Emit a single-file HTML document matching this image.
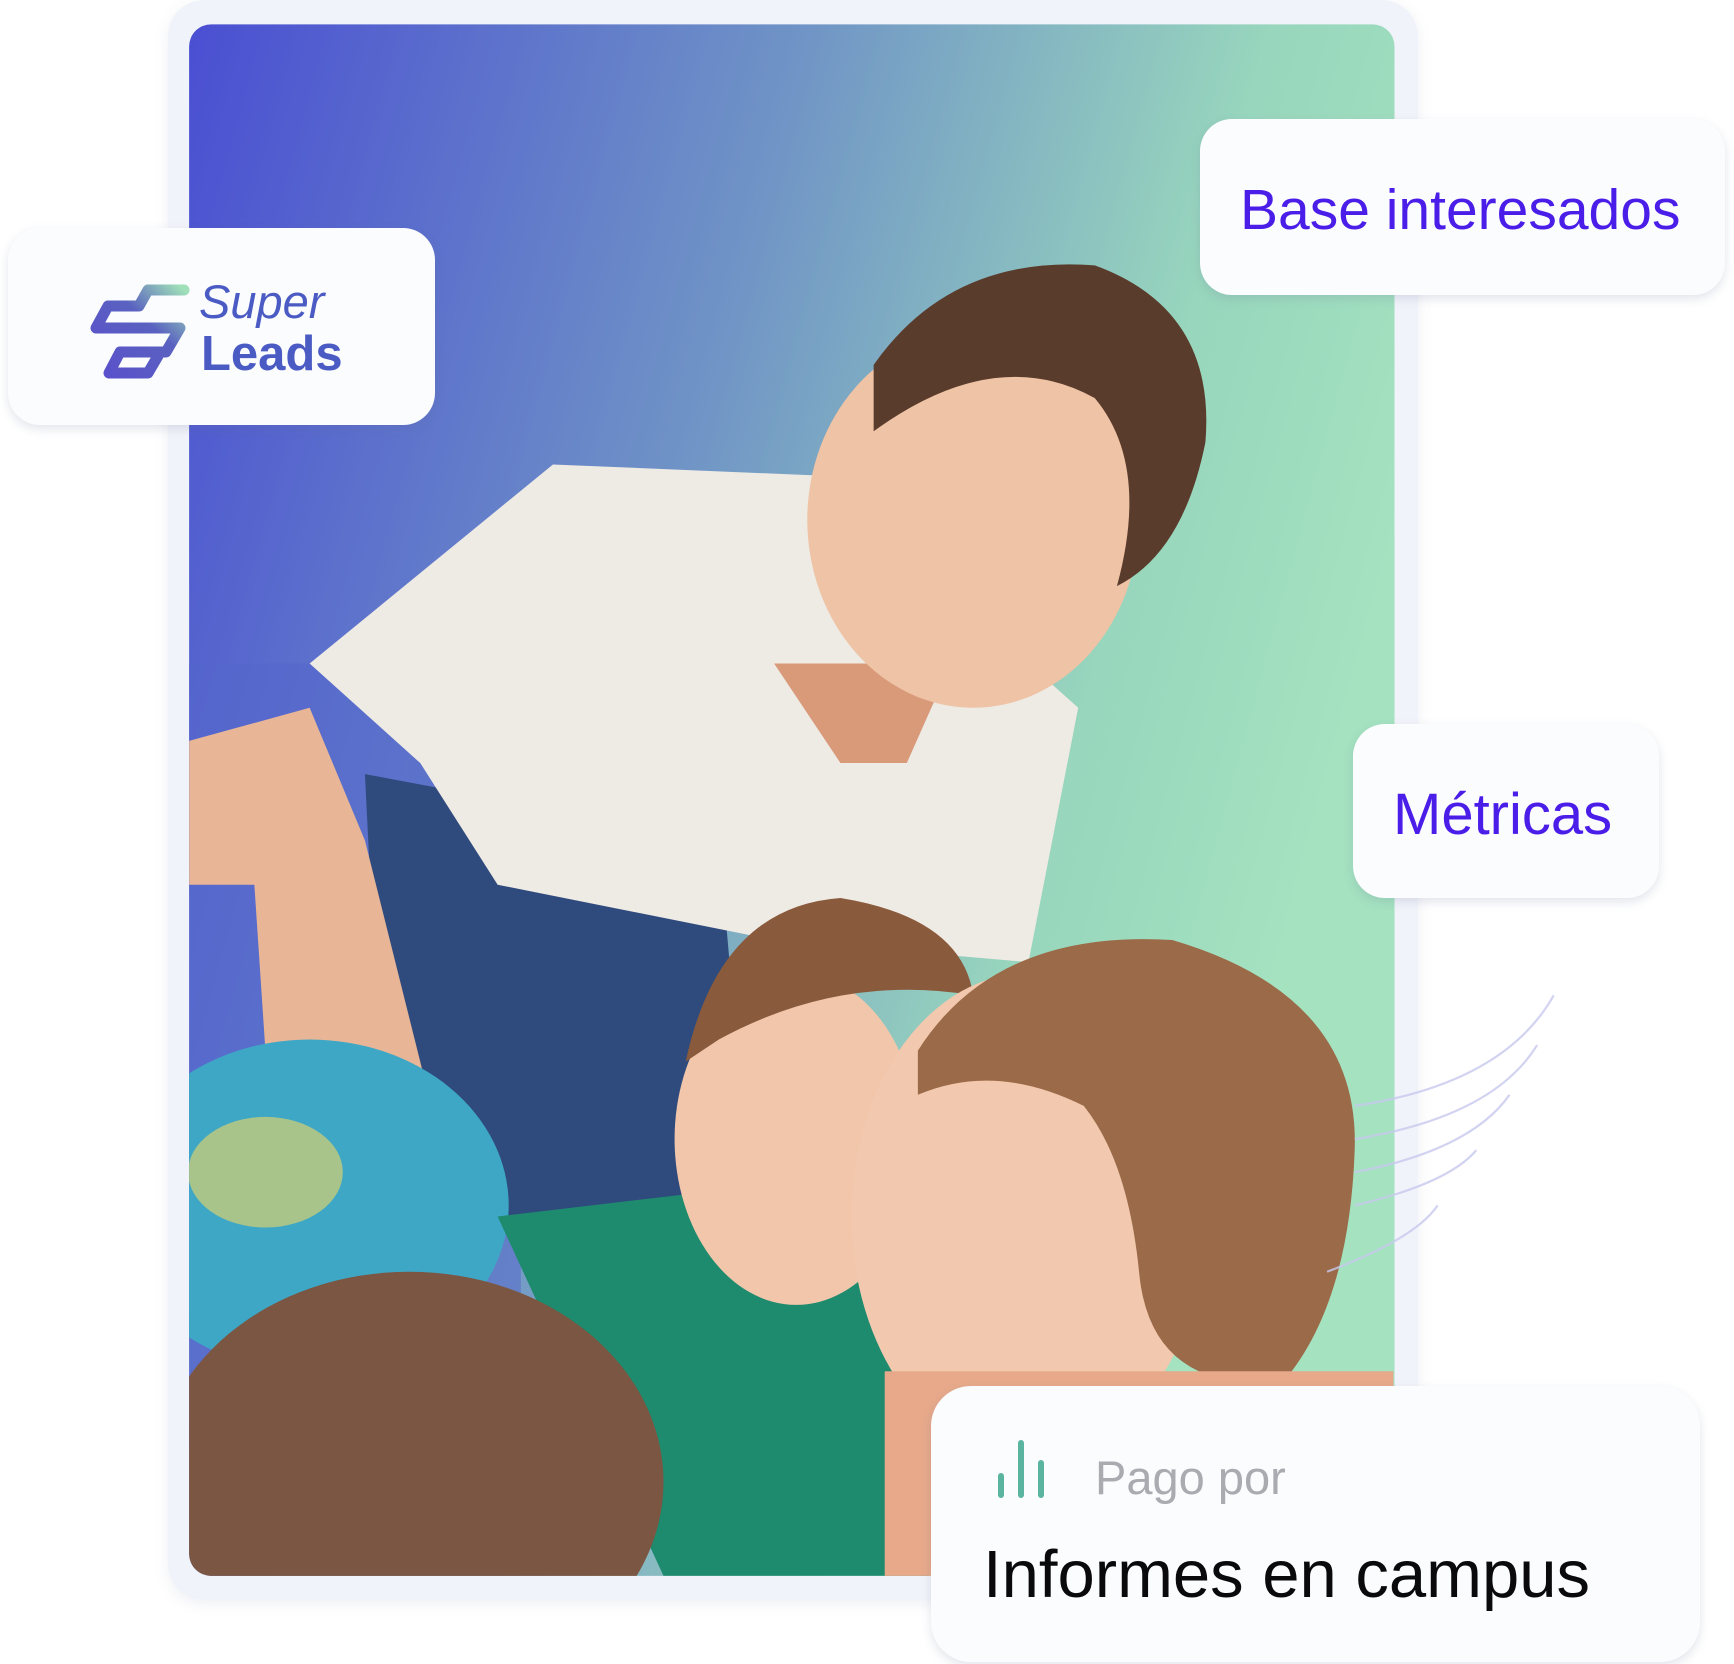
<!DOCTYPE html>
<html><head><meta charset="utf-8"><style>
html,body{margin:0;padding:0;background:#fff;}
body{width:1734px;height:1664px;position:relative;overflow:hidden;font-family:"Liberation Sans",sans-serif;}
.frame{position:absolute;left:168px;top:0;width:1250px;height:1600px;border-radius:36px;background:#f1f3fa;box-shadow:0 4px 14px rgba(120,130,170,.12);}
svg.bg{position:absolute;left:0;top:0;}
.card{position:absolute;background:#fbfcfe;border-radius:32px;box-shadow:0 4px 10px rgba(100,110,150,.18);}
.t{position:absolute;white-space:nowrap;line-height:1;}
</style></head><body>
<div class="frame"></div>
<svg class="bg" width="1734" height="1664" viewBox="0 0 1734 1664">
<defs>
<linearGradient id="g" x1="0" y1="0" x2="1" y2="0.35">
<stop offset="0" stop-color="#4a4fd2"/><stop offset="0.45" stop-color="#6f93c6"/><stop offset="0.8" stop-color="#98d6bd"/><stop offset="1" stop-color="#a4e2c0"/></linearGradient>
<clipPath id="c"><rect x="171" y="22" width="1090" height="1403" rx="20"/></clipPath>
</defs>
<g transform="scale(1.10587)">
<rect x="171" y="22" width="1090" height="1403" rx="20" fill="url(#g)"/>
<g clip-path="url(#c)">
<rect x="171" y="600" width="300" height="825" fill="#5465cc" opacity=".5"/>
<polygon points="330,700 650,760 680,1100 420,1110 340,900" fill="#2f4a7c"/>
<polygon points="171,670 280,640 330,760 390,1000 340,1030 240,950 230,800 171,800" fill="#e8b696"/>
<polygon points="280,600 500,420 740,430 975,640 930,870 700,850 450,800 380,690" fill="#eeeae4"/>
<polygon points="700,600 860,600 820,690 760,690" fill="#d99a7a"/>
<ellipse cx="880" cy="470" rx="150" ry="170" fill="#efc3a5"/>
<path d="M790,330 Q860,230 990,240 Q1100,280 1090,400 Q1070,500 1010,530 Q1040,420 990,360 Q900,310 790,390 Z" fill="#5a3c2c"/>
<ellipse cx="280" cy="1090" rx="180" ry="150" fill="#3ea7c6"/>
<ellipse cx="240" cy="1060" rx="70" ry="50" fill="#a8c48a"/>
<polygon points="450,1100 620,1080 840,1140 840,1425 600,1425" fill="#1e8a6e"/>
<ellipse cx="720" cy="1030" rx="110" ry="150" fill="#f1c6aa"/>
<path d="M620,960 Q650,820 760,812 Q870,830 880,900 Q760,880 650,940 Z" fill="#8a5a3c"/>
<ellipse cx="930" cy="1100" rx="160" ry="220" fill="#f2c9ae"/>
<path d="M830,950 Q900,840 1060,850 Q1230,900 1225,1040 Q1220,1180 1160,1250 Q1040,1260 1030,1150 Q1020,1050 980,1000 Q900,960 830,990 Z" fill="#9b6a48"/>
<rect x="800" y="1240" width="460" height="200" fill="#e7a98a"/>
<ellipse cx="370" cy="1340" rx="230" ry="190" fill="#7b5642"/>
</g>
<g fill="none" stroke="#c8c9ee" stroke-width="2" opacity=".8">
<path d="M1225,1000 Q1360,980 1405,900"/><path d="M1225,1030 Q1350,1010 1390,945"/><path d="M1225,1060 Q1330,1040 1365,990"/><path d="M1225,1090 Q1310,1070 1335,1040"/><path d="M1200,1150 Q1280,1120 1300,1090"/>
</g>
</g>
</svg>

<div class="card" style="left:8px;top:228px;width:427px;height:197px;">
<svg width="120" height="120" style="position:absolute;left:70px;top:45px" viewBox="70 45 120 120">
<defs><linearGradient id="lg" x1="0" y1="1" x2="1" y2="0"><stop offset="0" stop-color="#5a4fcc"/><stop offset=".6" stop-color="#5a62c0"/><stop offset="1" stop-color="#9fe0b8"/></linearGradient></defs>
<path d="M176,62 H140 L131,78 M131,78 H100 L88,100 H172 L158,124 H112 L101,145 H140 L150,128" fill="none" stroke="url(#lg)" stroke-width="11" stroke-linejoin="round" stroke-linecap="round"/>
</svg>
<div class="t" style="left:191px;top:50px;font-size:47px;font-style:italic;color:#4b5bc4;">Super</div>
<div class="t" style="left:193px;top:102px;font-size:49px;font-weight:bold;color:#4b5bc4;">Leads</div>
</div>

<div class="card" style="left:1200px;top:119px;width:525px;height:176px;">
<div class="t" style="left:40px;top:63px;font-size:57px;color:#4a1ee8;">Base interesados</div>
</div>

<div class="card" style="left:1353px;top:724px;width:306px;height:174px;">
<div class="t" style="left:40px;top:62px;font-size:58px;color:#4a1ee8;">Métricas</div>
</div>

<div class="card" style="left:931px;top:1386px;width:769px;height:276px;border-radius:40px;">
<div style="position:absolute;left:67px;top:87px;width:6px;height:25px;border-radius:3px;background:#5ab4a0"></div>
<div style="position:absolute;left:87px;top:54px;width:6px;height:58px;border-radius:3px;background:#5ab4a0"></div>
<div style="position:absolute;left:107px;top:74px;width:6px;height:38px;border-radius:3px;background:#5ab4a0"></div>
<div class="t" style="left:164px;top:68px;font-size:47px;color:#a9abb1;">Pago por</div>
<div class="t" style="left:52px;top:155px;font-size:67px;color:#0a0a0c;">Informes en campus</div>
</div>
</body></html>
